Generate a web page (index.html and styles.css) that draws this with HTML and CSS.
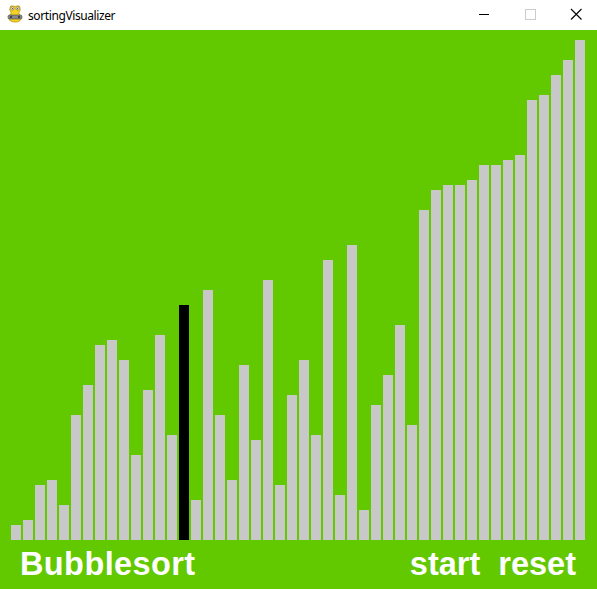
FILE: index.html
```html
<!DOCTYPE html>
<html>
<head>
<meta charset="utf-8">
<link rel="stylesheet" href="styles.css">
</head>
<body>
<div class="window">
  <div class="titlebar">
    <svg class="appicon" width="16" height="18" viewBox="0 0 16 18">
      <path d="M3 3 Q3 0 6 1 Q8 2 10 1 Q13 0 13 3 Q14 5 12 7 L12 9 Q14 10 14 13 Q14 17 8 17 Q2 17 2 13 Q2 10 4 9 L4 7 Q2 5 3 3 Z" fill="#f5d320" stroke="#b8961a" stroke-width="0.8"/>
      <circle cx="5.5" cy="3.5" r="1.6" fill="#fff" stroke="#555" stroke-width="0.5"/>
      <circle cx="10.5" cy="3.5" r="1.6" fill="#fff" stroke="#555" stroke-width="0.5"/>
      <circle cx="5.7" cy="3.7" r="0.6" fill="#222"/>
      <circle cx="10.3" cy="3.7" r="0.6" fill="#222"/>
      <rect x="1" y="10" width="14" height="4" rx="1.5" fill="#8a8a8a" stroke="#444" stroke-width="0.6"/>
      <circle cx="4" cy="12" r="1.2" fill="#444"/>
      <circle cx="12" cy="12" r="1.2" fill="#444"/>
    </svg>
    <span class="title">sortingVisualizer</span>
    <div class="controls">
      <svg class="ctl" width="46" height="30" viewBox="0 0 46 30"><path d="M18 14.5 H28" stroke="#000" stroke-width="1"/></svg>
      <svg class="ctl" width="46" height="30" viewBox="0 0 46 30"><rect x="18.5" y="9.5" width="10" height="10" fill="none" stroke="#ccc" stroke-width="1"/></svg>
      <svg class="ctl" width="46" height="30" viewBox="0 0 46 30"><path d="M18 9 L28.5 19.5 M28.5 9 L18 19.5" stroke="#000" stroke-width="1.1"/></svg>
    </div>
  </div>
  <div class="canvas">
    <div class="bars">
      <div class="bar" style="height:15px"></div>
      <div class="bar" style="height:20px"></div>
      <div class="bar" style="height:55px"></div>
      <div class="bar" style="height:60px"></div>
      <div class="bar" style="height:35px"></div>
      <div class="bar" style="height:125px"></div>
      <div class="bar" style="height:155px"></div>
      <div class="bar" style="height:195px"></div>
      <div class="bar" style="height:200px"></div>
      <div class="bar" style="height:180px"></div>
      <div class="bar" style="height:85px"></div>
      <div class="bar" style="height:150px"></div>
      <div class="bar" style="height:205px"></div>
      <div class="bar" style="height:105px"></div>
      <div class="bar active" style="height:235px"></div>
      <div class="bar" style="height:40px"></div>
      <div class="bar" style="height:250px"></div>
      <div class="bar" style="height:125px"></div>
      <div class="bar" style="height:60px"></div>
      <div class="bar" style="height:175px"></div>
      <div class="bar" style="height:100px"></div>
      <div class="bar" style="height:260px"></div>
      <div class="bar" style="height:55px"></div>
      <div class="bar" style="height:145px"></div>
      <div class="bar" style="height:180px"></div>
      <div class="bar" style="height:105px"></div>
      <div class="bar" style="height:280px"></div>
      <div class="bar" style="height:45px"></div>
      <div class="bar" style="height:295px"></div>
      <div class="bar" style="height:30px"></div>
      <div class="bar" style="height:135px"></div>
      <div class="bar" style="height:165px"></div>
      <div class="bar" style="height:215px"></div>
      <div class="bar" style="height:115px"></div>
      <div class="bar" style="height:330px"></div>
      <div class="bar" style="height:350px"></div>
      <div class="bar" style="height:355px"></div>
      <div class="bar" style="height:355px"></div>
      <div class="bar" style="height:360px"></div>
      <div class="bar" style="height:375px"></div>
      <div class="bar" style="height:375px"></div>
      <div class="bar" style="height:380px"></div>
      <div class="bar" style="height:385px"></div>
      <div class="bar" style="height:440px"></div>
      <div class="bar" style="height:445px"></div>
      <div class="bar" style="height:465px"></div>
      <div class="bar" style="height:480px"></div>
      <div class="bar" style="height:500px"></div>
    </div>
    <div class="footer">
      <span class="label wide">Bubblesort</span>
      <div class="buttons">
        <span class="label">start</span>
        <span class="label">reset</span>
      </div>
    </div>
  </div>
</div>
</body>
</html>
```

FILE: styles.css
```css
html, body {
  margin: 0;
  padding: 0;
  background: #ffffff;
}

.window {
  width: 597px;
  height: 589px;
  display: flex;
  flex-direction: column;
  overflow: hidden;
}

.titlebar {
  height: 30px;
  flex: 0 0 30px;
  background: #ffffff;
  display: flex;
  align-items: center;
  padding-left: 7px;
  box-sizing: border-box;
}

.appicon {
  display: block;
  margin-right: 5px;
  margin-top: -2px;
}

.title {
  font-family: "Noto Sans", "Open Sans", sans-serif;
  font-size: 12px;
  color: #000000;
  letter-spacing: -0.4px;
}

.controls {
  margin-left: auto;
  display: flex;
  align-items: center;
  margin-right: -2px;
}

.ctl {
  display: block;
}

.canvas {
  flex: 1 1 auto;
  background: #62c800;
  display: flex;
  flex-direction: column;
}

.bars {
  height: 510px;
  flex: 0 0 510px;
  display: flex;
  align-items: flex-end;
  gap: 2px;
  padding-left: 11px;
  box-sizing: border-box;
}

.bar {
  width: 10px;
  flex: 0 0 10px;
  background: #c8c8c8;
}

.bar.active {
  background: #000000;
}

.footer {
  display: flex;
  justify-content: space-between;
  padding: 8px 21px 0 20px;
}

.buttons {
  display: flex;
  gap: 18px;
}

.label {
  font-family: "Liberation Sans", Arial, sans-serif;
  font-weight: bold;
  font-size: 32.5px;
  line-height: 33px;
  color: #ffffff;
}

.label.wide {
  letter-spacing: 0.4px;
}
```
